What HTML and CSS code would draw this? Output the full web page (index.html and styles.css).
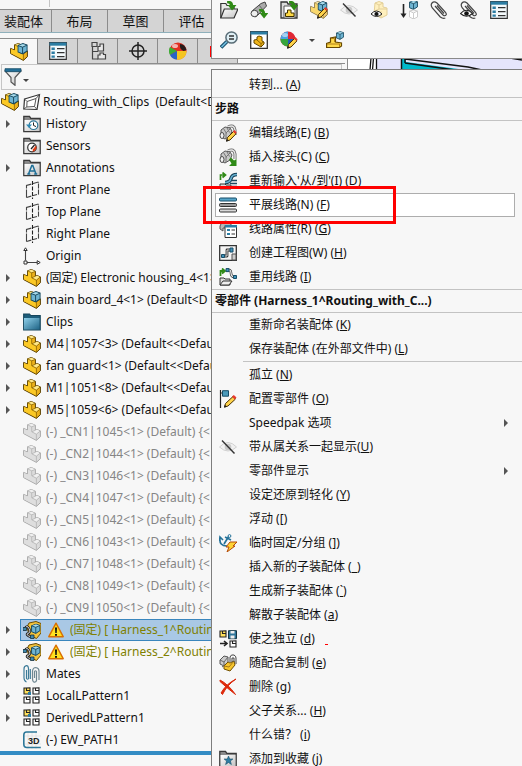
FILE: index.html
```html
<!DOCTYPE html>
<html lang="zh-CN">
<head>
<meta charset="utf-8">
<meta name="viewport" content="width=device-width, initial-scale=1">
<title>Routing_with_Clips</title>
<link rel="stylesheet" href="styles.css">
</head>
<body>
<svg class="sprite" aria-hidden="true">
  <defs>
    <linearGradient id="g-blue" x1="0" y1="0" x2="1" y2="1"><stop offset="0" stop-color="#8fd0ea"/><stop offset="1" stop-color="#1f6486"/></linearGradient>
    <linearGradient id="g-grey" x1="0" y1="0" x2="1" y2="1"><stop offset="0" stop-color="#fff"/><stop offset="1" stop-color="#c4c4c4"/></linearGradient>
  </defs>
  <symbol id="part" viewBox="0 0 18 18">
    <path d="M.6 5.4 4.5 7V1.8L8.4.5l4 1.8v5l1.800-.8 3.200 1.400v5.800l-4 3.700L.6 10.600Z" fill="var(--mid)" stroke="var(--line)"/>
    <path d="M4.900 2.200 8.700 4v5l4.500 2.400v5.200L1 10.200V6l3.900 1.500Z" fill="var(--face)"/>
    <path d="M4.500 1.900 8.400.700l3.800 1.600-3.700 1.500ZM9 8.600l5.200-1.900 2.800 1.300-3.800 2.900Z" fill="var(--light)"/>
    <path d="M8.700 3.800v5l4.700 2.400v6M8.700 3.800l3.600-1.400M4.500 1.800l4.200 2M13.400 11.200l3.800-3.200M9 8.700l3.500-1.500" fill="none" stroke="var(--edge)" stroke-width=".8"/>
  </symbol>
  <symbol id="cube" viewBox="0 0 10 11">
    <path d="M.6 2.4 5.4.6l4 1.400v5.600L5 10.400.6 8.600Z" fill="#6eb4d2" stroke="#16465c" stroke-width="1"/>
    <path d="m1 2.500 4-1.400 4 1.100-4 1.600Z" fill="#a9dbec"/>
    <path d="M.6 2.400 5 4l4.400-2M5 4v6.400" fill="none" stroke="#16465c" stroke-width=".9"/>
  </symbol>
  <symbol id="assembly" viewBox="0 0 18 18">
    <use href="#part"/><use href="#cube" x="7.300" y="0" width="10.500" height="11.500"/>
  </symbol>
  <symbol id="harness" viewBox="0 0 18 18">
    <path d="M4 6 6 2l7-1.500 5 2V12l-4.500 5.500L6 14Z" fill="#f3c33c" stroke="#6d4d00"/>
    <use href="#cube" x="8" y="2.500" width="9.500" height="10.500"/>
    <path d="M2 7.500q2-4 4 0t-1 5 3 3.500" fill="none" stroke="#222" stroke-width="2.600"/>
    <path d="M2 7.500q2-4 4 0t-1 5 3 3.500" fill="none" stroke="#ddd" stroke-width="1"/>
    <path d="M0 6.500h3.500v3H0ZM7.500 14h3.500v3.500H7.500Z" fill="#3f89ac" stroke="#16303c" stroke-width=".8"/>
  </symbol>
  <symbol id="folder-base" viewBox="0 0 18 18">
    <path d="M.8 2.500V1.300h5.700l1.300 2h9.400V16.500H.8Z" fill="#888" stroke="#3a3a3a" stroke-width="1.300"/>
    <path d="M1.500 5h15v11h-15Z" fill="url(#g-grey)"/>
  </symbol>
  <symbol id="history" viewBox="0 0 18 18"><use href="#folder-base"/><circle cx="10.500" cy="10.200" r="4.300" fill="#fff" stroke="#2d7596" stroke-width="1.200"/><path d="M10.500 7.500v2.900l2.500 1.200" fill="none" stroke="#222"/><path d="M3 9.500h6L6 13Z" fill="#2d8ab5"/></symbol>
  <symbol id="sensors" viewBox="0 0 18 18"><use href="#folder-base"/><circle cx="9" cy="10.500" r="4.300" fill="#fff" stroke="#333" stroke-width="1.200"/><path d="M13 8.500a4.300 4.300 0 0 1-3.500 6.200l.5-2.500Z" fill="#e13a12"/><path d="m8 12 3.500-4" stroke="#222" stroke-width="1.400"/></symbol>
  <symbol id="annot" viewBox="0 0 18 18"><use href="#folder-base"/><path d="m5.500 15 3.300-8.500h1L13 15M6.700 12h5M4.300 15h3M11.200 15h3" fill="none" stroke="#1f6f97" stroke-width="1.500"/></symbol>
  <symbol id="plane" viewBox="0 0 18 18"><path d="M3.500 16.500v-12L15.500 1" fill="none" stroke="#444" stroke-width="1.100" stroke-dasharray="8 1"/><path d="M3.500 16.500 15.500 13V1" fill="none" stroke="#444" stroke-width="1.100" stroke-dasharray="5 1"/><path d="M9.500 0v18" stroke="#222" stroke-width="1.100" stroke-dasharray="4 1.500"/></symbol>
  <symbol id="origin" viewBox="0 0 18 18"><path d="M2.500 2v11.500M4 15.500h11" fill="none" stroke="#444" stroke-width="1.100"/><path d="M.8 3.500 2.500.8l1.700 2.700ZM14.200 13.700l3 1.800-3 1.800ZM1 14h3v3H1Z" fill="#fff" stroke="#333"/></symbol>
  <symbol id="folder" viewBox="0 0 18 18"><path d="M.7 2V1h5.800l1.200 1.500h9.500v14.300H.7Z" fill="#1d5d7b" stroke="#16465c" stroke-width="1.200"/><path d="M1 5h15.500v11.500H1Z" fill="url(#g-blue)"/></symbol>
  <symbol id="sketch" viewBox="0 0 18 18"><path d="m1.500 6 15-4.500L14 16.500.8 16Z" fill="#fff" stroke="#333" stroke-width="1.200"/><path d="m4 8.500 9-3-1.500 8L3.800 14Z" fill="#fff" stroke="#555"/><path d="m1.500 6 2.500 2.500M13 5.500l3.500-4M11.500 13.500l2.500 3M.8 16l3-2" stroke="#555"/></symbol>
  <symbol id="warn" viewBox="0 0 16 16"><path d="M8 1.200 15.200 14.700H.8Z" fill="#ffe11f" stroke="#d96f00" stroke-width="1.400" stroke-linejoin="round"/><path d="M7 5.500h2L8.700 11H7.300ZM7 12h2v1.800H7Z" fill="#111"/></symbol>
  <symbol id="mates" viewBox="0 0 18 18"><path d="M3.500 5v8.500q1.200 1.500 2 0V3.500Q5.200.600 3.500.700 1 1 1 4v9q.3 3.500 2.500 3.800M7.300 14V4" fill="none" stroke="#3d7b98" stroke-width="1.200"/><path d="M11.500 13V6.500q1-1.500 2 0v9q-1 2.500-3 1.200-1-.700-1-3.200V6q.5-3.500 3.300-3.500Q16 3 16 6v9" fill="none" stroke="#6f8792" stroke-width="1.200"/></symbol>
  <symbol id="cell" viewBox="0 0 8 8"><path d="M1 1h2.500v2.500H7V7H1ZM3.500 3.500V1L7 .8v2.700" fill="var(--cell)" stroke="#222" stroke-width="1.100"/></symbol>
  <symbol id="pattern" viewBox="0 0 18 18"><use class="cell-yellow" href="#cell" width="8" height="8"/><use class="cell-white" href="#cell" x="9" width="8" height="8"/><use class="cell-white" href="#cell" y="9" width="8" height="8"/><use class="cell-white" href="#cell" x="9" y="9" width="8" height="8"/><path d="M5 5h3v3H5Z" fill="#2c7da3"/></symbol>
  <symbol id="path3d" viewBox="0 0 18 18"><path d="M5 0v18M9 0v18M13 0v18M0 5h18M0 13h18" stroke="#ddd" stroke-width=".7"/><path d="M14 1H3.500Q.8 1 .8 4v9q0 3.500 3 3.500h14" fill="none" stroke="#2d7899" stroke-width="1.600"/></symbol>
  <symbol id="props" viewBox="0 0 18 18"><path d="M.7.700h16.600v16.600H.7Z" fill="#f4fafc" stroke="#333" stroke-width="1.200"/><path d="M.5.500h17v3.200H.5Z" fill="#2c7da3"/><path d="M2.500 5.500h3.300v2.500H2.500ZM2.500 9.500h3.300V12H2.500ZM2.500 13.500h3.300v2.200H2.500Z" fill="#2c7da3"/><path d="M8 6.700h7.500M8 10.700h7.500M8 14.700h7.500" stroke="#333" stroke-width="1.200"/></symbol>
  <symbol id="config" viewBox="0 0 18 18"><path d="M3 .500h5v4H3ZM3.500 5v12H9M4 9.500h5" fill="none" stroke="#444" stroke-width="1.200"/><path d="M9 4.500h2V2h3.500v7H9ZM9 13h2v-2h3.500v1.500h2V17H9Z" fill="#e9e9e9" stroke="#444" stroke-width="1.200"/></symbol>
  <symbol id="target" viewBox="0 0 18 18"><circle cx="9" cy="9" r="6" fill="none" stroke="#222" stroke-width="1.500"/><path d="M9 0v18M0 9h18" stroke="#222" stroke-width="1.500"/></symbol>
  <symbol id="ball" viewBox="0 0 18 18"><circle cx="9" cy="9" r="8.600" fill="#e33022"/><path d="M8 9 1 5A8.600 8.600 0 0 0 1 13Z" fill="#3bae36"/><path d="M8 9 1 13a8.600 8.600 0 0 0 7 4.600Z" fill="#2864c8"/><path d="M8 9v8.600A8.600 8.600 0 0 0 17.600 9Z" fill="#f4c522"/><path d="M11 2q5 0 6.500 6l-3 1Q10 7 11 2Z" fill="#251c1b"/><ellipse cx="6" cy="4" rx="3" ry="2" fill="#fff" opacity=".65"/></symbol>
  <symbol id="ball4" viewBox="0 0 18 18"><circle cx="8" cy="8" r="7.600" fill="#e02735"/><path d="M8 8V.400A7.600 7.600 0 0 0 .4 8Z" fill="#4aa0e0"/><path d="M8 8H.4A7.600 7.600 0 0 0 8 15.600Z" fill="#36a53c"/><path d="M8 8v7.600A7.600 7.600 0 0 0 15.600 8Z" fill="#2459b8"/><ellipse cx="5" cy="4" rx="3" ry="2" fill="#fff" opacity=".5"/><use href="#pencil"/></symbol>
  <symbol id="pencil" viewBox="0 0 18 18"><path d="m7.500 17 1-3.500 6-6 2.500 2.300-6 6.200Z" fill="#ffd34a" stroke="#4a3000"/><path d="m14 7.500 1.500-1.500 2.200 2.500-1.400 1.300Z" fill="#e83a30"/><path d="m7 17.700.9-3 2 2Z" fill="#222"/></symbol>
  <symbol id="funnel" viewBox="0 0 18 18"><path d="M1 3h16l-6 6.500v7.800L7 14V9.500Z" fill="url(#g-grey)" stroke="#555" stroke-width="1.200"/><path d="M1 .7h16v3H1Z" fill="#236f98" stroke="#164c67" stroke-width=".8"/></symbol>
  <symbol id="arrow-down" viewBox="0 0 10 10"><path d="M1 1q5-1 5.500 3.500h3L5.500 9.600 1.500 4.500h2Q3.500 3 1 3Z" fill="#2f8a16"/></symbol>
  <symbol id="open" viewBox="0 0 18 18"><path d="M.8 16.500V2.500h5l1.200 2h7v12Z" fill="#e8e8e8" stroke="#333" stroke-width="1.200"/><path d="m.8 17 3.500-9H18l-4 9Z" fill="url(#g-grey)" stroke="#333" stroke-width="1.200"/><use href="#arrow-down" x="6" y="-1" width="11" height="11"/></symbol>
  <symbol id="connector" viewBox="0 0 18 18"><path d="M9 3q6-3 7 3v5" fill="none" stroke="#666" stroke-width="3"/><path d="M9 3q6-3 7 3v5" fill="none" stroke="#e6e6e6" stroke-width="1.400"/><path d="m2 6 4-3 5 1 2 3-2 5-5 3-4-2Z" fill="#c9c9c9" stroke="#555"/><path d="m4.500 4.500 3 5m0-6.500 3 5.500M7 14V9l4-4" fill="none" stroke="#777"/><ellipse cx="3" cy="11.500" rx="2" ry="3" fill="#f2f2f2" stroke="#444"/></symbol>
  <symbol id="insert-tube" viewBox="0 0 18 18"><path d="m2 10 9-7.500 4-1.500 1.500 4L7 15q-4 3-5-5Z" fill="#aaa" stroke="#444"/><path d="m9 4 4 5" stroke="#666"/><ellipse cx="4.500" cy="12.500" rx="3.500" ry="3.200" fill="#eee" stroke="#444"/><use href="#arrow-down" x="8" y="7" width="11" height="11"/></symbol>
  <symbol id="open-sub" viewBox="0 0 18 18"><path d="M1 1h6l1 2h9v14H1Z" fill="#ddd" stroke="#333" stroke-width="1.300"/><path d="M4 5h11v12H4Z" fill="#fff" stroke="#555"/><path d="M5.500 15.500V12h2V9h3.500v3h3v3.500Z" fill="#ffda45" stroke="#3f3100"/><use href="#arrow-down" x="8" y="-1" width="11" height="11"/></symbol>
  <symbol id="edit-asm" viewBox="0 0 18 18"><g opacity=".65"><use href="#part"/></g><use href="#cube" x="7.500" width="10" height="11"/><use href="#pencil"/></symbol>
  <symbol id="hide" viewBox="0 0 18 18"><path d="M.5 9Q9 0 17.500 9 9 17 .5 9Z" fill="#f1f1f1" stroke="#d0d0d0"/><circle cx="9" cy="9" r="3.300" fill="#c8c8c8"/><path d="m3 2.500 12.500 13" stroke="#333" stroke-width="1.400"/></symbol>
  <symbol id="eye" viewBox="0 0 12 8"><path d="M.5 4Q6-2 11.500 4 6 9 .5 4Z" fill="#fff" stroke="#222"/><circle cx="6" cy="4" r="2.100" fill="#111"/></symbol>
  <symbol id="show-parts" viewBox="0 0 18 18"><path d="m5 2 4-1.500L13 2v4l4 1v7l-6 3-7-4Z" fill="#fff0be" stroke="#e3cf98"/><path d="m5 2 4 2 4-2M9 4v4l8 0M11 10v6M9 8l-4 2" fill="none" stroke="#e3cf98"/><use href="#eye" y="9" width="13" height="8"/></symbol>
  <symbol id="suppress" viewBox="0 0 18 18"><path d="M3.500 3v11" stroke="#222" stroke-width="1.600"/><path d="m.5 12.500 3 4.500 3-4.500Z" fill="#222"/><use href="#cube" x="9" y="-1" width="9" height="10"/><path d="m9.500 10 4-1 4 1v6l-4 2-4-2Zm0 0 4 2 4-2m-4 2v6" fill="#fff" stroke="#ccc"/></symbol>
  <symbol id="clip" viewBox="0 0 18 18"><path d="m5 5 8 9q2 1.500 3 0 .8-1-.5-2.700L7 2Q4-.3 2 2q-1.700 2 .3 5l8 9q2.800 2 5 1M7 4.500l7 8" fill="none" stroke="#444" stroke-width="1.200"/></symbol>
  <symbol id="clip-eye" viewBox="0 0 18 18"><use href="#clip"/><use href="#eye" y="8" width="13" height="9"/></symbol>
  <symbol id="magnify" viewBox="0 0 18 18"><path d="m1 16.500 6-6" stroke="#174e6a" stroke-width="3.800"/><path d="m1.500 16 5.500-5.500" stroke="#70bbdc" stroke-width="1.700"/><circle cx="11.500" cy="6.500" r="5.600" fill="#dfeff5" stroke="#596d77" stroke-width="1.500"/><path d="M9 5h5M9 8h5" stroke="#333" stroke-width="1.600"/></symbol>
  <symbol id="part-window" viewBox="0 0 18 18"><path d="M.7.700h16.600v16.600H.7Z" fill="#fff" stroke="#333" stroke-width="1.300"/><path d="M.5.500h17v3H.5Z" fill="#2c7da3"/><path d="m4 9 3-.500V6l2-1 3 1v4l2 1v2l-3 3-7-4Z" fill="#f0b51b" stroke="#654800"/><path d="m7 9 4 3.500 3-1.500m-3 1.500V15" fill="none" stroke="#8c6500"/></symbol>
  <symbol id="new-part" viewBox="0 0 18 18"><path d="M.6 16.500v-4L4.500 11V7l5-1v5l6 1v3l-2 1.500Z" fill="#ffda4a" stroke="#684900" stroke-width="1.200"/><path d="M1 13h12.500v3M5 7.500h3.500V11" fill="none" stroke="#b18019"/><use href="#cube" x="10" y="0" width="8" height="9"/></symbol>
  <symbol id="edit-route" viewBox="0 0 18 18"><use href="#connector"/><use href="#pencil"/></symbol>
  <symbol id="insert-conn" viewBox="0 0 18 18"><use href="#connector"/><path d="m10 11.500 2-2 3 3 2.500-1.500v7H10l2.500-2.500Z" fill="#2f8a16"/></symbol>
  <symbol id="from-to" viewBox="0 0 18 18"><path d="M1.500 8V3h4M3.500.500 6.500 3l-3 2.500" fill="none" stroke="#2f8a16" stroke-width="1.700"/><path d="M1 17v-5h5l1 1h5v4Z" fill="#ddd" stroke="#333"/><path d="M6 10.500q5 0 6-4t6-4" fill="none" stroke="#163f54" stroke-width="3.600"/><path d="M6 10.500q5 0 6-4t6-4" fill="none" stroke="#65afd0" stroke-width="1.600"/><path d="M12 8.500h6M11 11.500h7M13 14.500h5" stroke="#1d4a61" stroke-width="1.500"/></symbol>
  <symbol id="flatten" viewBox="0 0 18 18"><rect x=".5" y="2" width="17" height="3" rx="1" fill="#56a5c9" stroke="#174d68"/><rect x=".5" y="7.500" width="17" height="3" rx="1" fill="#999" stroke="#333"/><rect x=".5" y="13" width="17" height="3" rx="1" fill="#d8d8d8" stroke="#333"/></symbol>
  <symbol id="route-props" viewBox="0 0 18 18"><path d="M1 6 3 2l4-1 5 3v4H4v3L1 9Z" fill="#b7b7b7" stroke="#555"/><path d="M6 5.500h11.500V17.500H6Z" fill="#fff" stroke="#333"/><path d="M6 5h12v2.500H6ZM8 9h3v2H8ZM8 13h3v2H8Z" fill="#2c7da3"/><path d="M12.500 10H16M12.500 14H16" stroke="#333"/></symbol>
  <symbol id="drawing" viewBox="0 0 18 18"><path d="M.7 1.700h16.600v14.600H.7Z" fill="#f4f4f4" stroke="#333" stroke-width="1.300"/><path d="M3 12h5V6h5" fill="none" stroke="#333" stroke-width="2.800" stroke-linejoin="round"/><path d="M3 12h5V6h5" fill="none" stroke="#ddd" stroke-width="1"/><path d="M2.500 10.500h3v3h-3ZM11 4h3v4h-3Z" fill="#3f91b8" stroke="#174d68"/><path d="M13 10h4v6h-4Z" fill="#ccc" stroke="#555"/></symbol>
  <symbol id="reuse" viewBox="0 0 18 18"><path d="M1.500 8V3h3M3 .500 6 3 3 5.500" fill="none" stroke="#2f8a16" stroke-width="1.800"/><path d="M8 2q4-1 4 3t4 4" fill="none" stroke="#333" stroke-width="2.600"/><path d="M8 2q4-1 4 3t4 4" fill="none" stroke="#eee" stroke-width="1.200"/><path d="M7 .600h3v3H7ZM14.500 7.500h3v3h-3Z" fill="#3f91b8" stroke="#174d68"/><path d="M1 17v-7h4l1 1h5v6Z" fill="#ddd" stroke="#333"/><path d="m1 17 3-4h9l-3 4Z" fill="#eee" stroke="#333"/></symbol>
  <symbol id="configure" viewBox="0 0 18 18"><path d="M1.500 0v18" stroke="#222" stroke-width="1.200"/><path d="M2 3h2" stroke="#222"/><path d="M3.500.700h6v5.500h-6Z" fill="#4a9abb" stroke="#174d68"/><path d="m5.500 17 1-3.500 7.500-7 2.500 2.500-7.500 7Z" fill="#ffd34a" stroke="#4a3000"/><path d="m13 6.500 1.800-1.500 2.700 2.500-2 2Z" fill="#e83a30"/><path d="m5 17.700.9-3 2 2Z" fill="#222"/></symbol>
  <symbol id="anchor" viewBox="0 0 18 18"><path d="M1 4q-1 8 7 8M10 2 5 10M6 3l6 3M.500 7 1 3l3 3" fill="none" stroke="#257299" stroke-width="1.700"/><circle cx="10.500" cy="2" r="1.400" fill="#fff" stroke="#257299"/><path d="m11 8 7 0-4 4h2l-8 6 2-5H7Z" fill="#ffd334" stroke="#b44b09"/></symbol>
  <symbol id="independent" viewBox="0 0 18 18"><use class="cell-yellow" href="#cell" width="8" height="8"/><path d="M9.500.700h8v8h-8Z" fill="#2e759a" stroke="#163543"/><path d="M11.500 1h4v2.500h-4ZM11.500 5.500h4v3h-4Z" fill="#eee"/><path d="M1 13.500h6M5 11l3 2.500L5 16" fill="none" stroke="#222" stroke-width="1.600"/><use class="cell-white" href="#cell" x="10" y="10" width="8" height="8"/></symbol>
  <symbol id="copy-mates" viewBox="0 0 18 18"><path d="m1 6 4-4 4 1v5l-4 4-4-2Z" fill="#ccc" stroke="#555"/><path d="m1 6 4 2 4-5M5 8v4M3 13l4-3" stroke="#666" fill="none"/><path d="m5 12 4-4 2 1 4-2 1 4-5 6-6-2Z" fill="#f6c52d" stroke="#725000"/><path d="m5 12 5 1 5-6" fill="none" stroke="#a77917"/><path d="M11 8V3q1-3 4-2 2 1 2 3v6M13 8V4h2v4" fill="none" stroke="#444"/></symbol>
  <symbol id="delete" viewBox="0 0 18 18"><path d="M1 2Q9 6 16.500 16.500 8 10 1 3.500ZM17 1Q8 7 3.500 16.500L2 15Q7 6 17 1Z" fill="#e32c0b" stroke="#d9280b"/></symbol>
  <symbol id="favorite" viewBox="0 0 18 18"><use href="#folder-base"/><path d="m9.500 6 1.200 3h3.200l-2.500 2 1 3.500-2.900-2-2.900 2 1-3.500-2.500-2h3.200Z" fill="#2c7da3" stroke="#174d68" stroke-width=".6"/></symbol>
</svg>

<div class="app">
  <section class="side">
    <div class="ribbon-foot"></div>
    <nav class="ribbon-tabs"><button>装配体</button><button>布局</button><button>草图</button><button>评估</button></nav>
    <div class="panel-tabs">
      <button class="active" aria-label="特征树"><svg class="ico"><use href="#assembly"/></svg></button>
      <button aria-label="属性"><svg class="ico"><use href="#props"/></svg></button>
      <button aria-label="配置"><svg class="ico"><use href="#config"/></svg></button>
      <button aria-label="尺寸"><svg class="ico"><use href="#target"/></svg></button>
      <button aria-label="外观"><svg class="ico"><use href="#ball"/></svg></button>
      <button class="more" aria-label="更多"><span class="red-mark"></span></button>
    </div>
    <button class="filter" aria-label="过滤"><svg class="ico"><use href="#funnel"/></svg><span class="caret"></span></button>
    <div class="root"><svg class="ico"><use href="#assembly"/></svg><svg class="ico"><use href="#sketch"/></svg><span>Routing_with_Clips&nbsp; (Default&lt;D</span></div>
    <ul class="tree">
      <li class="open"><svg class="ico"><use href="#history"/></svg><span>History</span></li>
      <li><svg class="ico"><use href="#sensors"/></svg><span>Sensors</span></li>
      <li class="open"><svg class="ico"><use href="#annot"/></svg><span>Annotations</span></li>
      <li><svg class="ico"><use href="#plane"/></svg><span>Front Plane</span></li>
      <li><svg class="ico"><use href="#plane"/></svg><span>Top Plane</span></li>
      <li><svg class="ico"><use href="#plane"/></svg><span>Right Plane</span></li>
      <li><svg class="ico"><use href="#origin"/></svg><span>Origin</span></li>
      <li class="open"><svg class="ico"><use href="#part"/></svg><span>(固定) Electronic housing_4&lt;1&gt;</span></li>
      <li class="open"><svg class="ico"><use href="#assembly"/></svg><span>main board_4&lt;1&gt; (Default&lt;D</span></li>
      <li class="open"><svg class="ico"><use href="#folder"/></svg><span>Clips</span></li>
      <li class="open"><svg class="ico"><use href="#part"/></svg><span>M4|1057&lt;3&gt; (Default&lt;&lt;Default</span></li>
      <li class="open"><svg class="ico"><use href="#part"/></svg><span>fan guard&lt;1&gt; (Default&lt;&lt;Default</span></li>
      <li class="open"><svg class="ico"><use href="#part"/></svg><span>M1|1051&lt;8&gt; (Default&lt;&lt;Default</span></li>
      <li class="open"><svg class="ico"><use href="#part"/></svg><span>M5|1059&lt;6&gt; (Default&lt;&lt;Default</span></li>
      <li class="off"><svg class="ico"><use href="#part"/></svg><span>(-) _CN1|1045&lt;1&gt; (Default) {&lt;</span></li>
      <li class="off"><svg class="ico"><use href="#part"/></svg><span>(-) _CN2|1044&lt;1&gt; (Default) {&lt;</span></li>
      <li class="off"><svg class="ico"><use href="#part"/></svg><span>(-) _CN3|1046&lt;1&gt; (Default) {&lt;</span></li>
      <li class="off"><svg class="ico"><use href="#part"/></svg><span>(-) _CN4|1047&lt;1&gt; (Default) {&lt;</span></li>
      <li class="off"><svg class="ico"><use href="#part"/></svg><span>(-) _CN5|1042&lt;1&gt; (Default) {&lt;</span></li>
      <li class="off"><svg class="ico"><use href="#part"/></svg><span>(-) _CN6|1043&lt;1&gt; (Default) {&lt;</span></li>
      <li class="off"><svg class="ico"><use href="#part"/></svg><span>(-) _CN7|1048&lt;1&gt; (Default) {&lt;</span></li>
      <li class="off"><svg class="ico"><use href="#part"/></svg><span>(-) _CN8|1049&lt;1&gt; (Default) {&lt;</span></li>
      <li class="off"><svg class="ico"><use href="#part"/></svg><span>(-) _CN9|1050&lt;1&gt; (Default) {&lt;</span></li>
      <li class="open alert selected"><svg class="ico"><use href="#harness"/></svg><svg class="warn"><use href="#warn"/></svg><span>(固定) [ Harness_1^Routing</span></li>
      <li class="open alert"><svg class="ico"><use href="#harness"/></svg><svg class="warn"><use href="#warn"/></svg><span>(固定) [ Harness_2^Routing</span></li>
      <li class="open"><svg class="ico"><use href="#mates"/></svg><span>Mates</span></li>
      <li class="open"><svg class="ico"><use href="#pattern"/></svg><span>LocalLPattern1</span></li>
      <li class="open"><svg class="ico"><use href="#pattern"/></svg><span>DerivedLPattern1</span></li>
      <li><svg class="ico"><use href="#path3d"/><text class="label3d" x="5" y="13">3D</text></svg><span>(-) EW_PATH1</span></li>
    </ul>
    <div class="rollback"></div>
  </section>
  <section class="view">
    <svg class="model" viewBox="0 0 174 12" preserveAspectRatio="xMinYMin slice" aria-hidden="true"><path d="M28 0h146v12H28Z" fill="#e5e5fb"/><path d="M22 12 23 0M24.500 12 25.500 0M28.500 12V0" stroke="#111" stroke-width="1.300"/><path d="M53 12V0h4l1 4 60 8Z" fill="#00b9ca"/><path d="M53.500 12V0M57 1l63 8 14 3M57 5l50 7M162 0l12 2M57 0v5" fill="none" stroke="#111" stroke-width="1.500"/></svg>
  </section>

  <div class="context-bar" role="toolbar">
    <div class="tools">
      <button aria-label="打开"><svg class="ico"><use href="#open"/></svg></button>
      <button aria-label="插入"><svg class="ico"><use href="#insert-tube"/></svg></button>
      <button aria-label="打开子装配体"><svg class="ico"><use href="#open-sub"/></svg></button>
      <button aria-label="编辑装配体"><svg class="ico"><use href="#edit-asm"/></svg></button>
      <button aria-label="隐藏"><svg class="ico"><use href="#hide"/></svg></button>
      <button aria-label="显示零部件"><svg class="ico"><use href="#show-parts"/></svg></button>
      <button aria-label="压缩"><svg class="ico"><use href="#suppress"/></svg></button>
      <button aria-label="配合"><svg class="ico"><use href="#clip"/></svg></button>
      <button aria-label="查看配合"><svg class="ico"><use href="#clip-eye"/></svg></button>
      <button aria-label="属性"><svg class="ico"><use href="#props"/></svg></button>
    </div>
    <div class="tools">
      <button aria-label="放大"><svg class="ico"><use href="#magnify"/></svg></button>
      <button aria-label="预览窗口"><svg class="ico"><use href="#part-window"/></svg></button>
      <button class="split" aria-label="外观"><svg class="ico"><use href="#ball4"/></svg><span class="caret"></span></button>
      <button aria-label="新零件"><svg class="ico"><use href="#new-part"/></svg></button>
    </div>
  </div>

  <div class="menu" role="menu">
    <button role="menuitem"><span>转到... (<u>A</u>)</span></button>
    <h2>步路</h2>
    <button role="menuitem"><svg class="ico"><use href="#edit-route"/></svg><span>编辑线路(E) (<u>B</u>)</span></button>
    <button role="menuitem"><svg class="ico"><use href="#insert-conn"/></svg><span>插入接头(C) (<u>C</u>)</span></button>
    <button role="menuitem"><svg class="ico"><use href="#from-to"/></svg><span>重新输入'从/到'(I) (<u>D</u>)</span></button>
    <button role="menuitem" class="hot"><svg class="ico"><use href="#flatten"/></svg><span>平展线路(N) (<u>F</u>)</span></button>
    <button role="menuitem"><svg class="ico"><use href="#route-props"/></svg><span>线路属性(R) (<u>G</u>)</span></button>
    <button role="menuitem"><svg class="ico"><use href="#drawing"/></svg><span>创建工程图(W) (<u>H</u>)</span></button>
    <button role="menuitem"><svg class="ico"><use href="#reuse"/></svg><span>重用线路 (<u>I</u>)</span></button>
    <h2>零部件 (Harness_1^Routing_with_C...)</h2>
    <button role="menuitem"><span>重新命名装配体 (<u>K</u>)</span></button>
    <button role="menuitem"><span>保存装配体 (在外部文件中) (<u>L</u>)</span></button>
    <hr>
    <button role="menuitem"><span>孤立 (<u>N</u>)</span></button>
    <button role="menuitem"><svg class="ico"><use href="#configure"/></svg><span>配置零部件 (<u>O</u>)</span></button>
    <button role="menuitem" class="sub"><span>Speedpak 选项</span></button>
    <button role="menuitem"><svg class="ico"><use href="#hide"/></svg><span>带从属关系一起显示(<u>U</u>)</span></button>
    <button role="menuitem" class="sub"><span>零部件显示</span></button>
    <button role="menuitem"><span>设定还原到轻化 (<u>Y</u>)</span></button>
    <button role="menuitem"><span>浮动 (<u>[</u>)</span></button>
    <button role="menuitem"><svg class="ico"><use href="#anchor"/></svg><span>临时固定/分组 (<u>]</u>)</span></button>
    <button role="menuitem"><span>插入新的子装配体 (<u>_</u>)</span></button>
    <button role="menuitem"><span>生成新子装配体 (<u>`</u>)</span></button>
    <button role="menuitem"><span>解散子装配体 (<u>a</u>)</span></button>
    <button role="menuitem"><svg class="ico"><use href="#independent"/></svg><span>使之独立 (<u>d</u>)</span><i class="dot"></i></button>
    <button role="menuitem"><svg class="ico"><use href="#copy-mates"/></svg><span>随配合复制 (<u>e</u>)</span></button>
    <button role="menuitem"><svg class="ico"><use href="#delete"/></svg><span>删除 (<u>g</u>)</span></button>
    <button role="menuitem"><span>父子关系... (<u>H</u>)</span></button>
    <button role="menuitem"><span>什么错？ (<u>i</u>)</span></button>
    <button role="menuitem"><svg class="ico"><use href="#favorite"/></svg><span>添加到收藏 (<u>j</u>)</span></button>
  </div>
  <div class="callout"></div>
</div>
</body>
</html>
```
FILE: styles.css
```css
* { box-sizing: border-box; }

body {
  margin: 0;
  background: #f7f7f7;
  color: #111;
  font: 12px/22px "Noto Sans", "Noto Sans CJK SC", sans-serif;
}

button {
  margin: 0;
  padding: 0;
  border: 0;
  background: none;
  color: inherit;
  font: inherit;
  text-align: left;
}

.sprite { position: absolute; width: 0; height: 0; }

.ico {
  --light: #ffe98a;
  --face: #fbc926;
  --mid: #eeb21c;
  --line: #5a4100;
  --edge: #8a6300;
  display: block;
  flex: none;
  width: 18px;
  height: 18px;
}

.cell-yellow { --cell: #ffe05a; }
.cell-white { --cell: #fff; }

.app {
  position: relative;
  display: grid;
  grid-template-columns: 2fr 1fr;
  height: 100vh;
  overflow: hidden;
}

.side { min-width: 0; border-right: 1px solid #8c8c8c; }

/* Command tabs */
.ribbon-foot { width: 50px; height: 7px; margin-bottom: 2px; border-right: 1px solid #c4c4c4; }

.ribbon-tabs {
  display: flex;
  height: 24px;
  border-top: 1px solid #8c8c8c;
  border-bottom: 1px solid #8fb0bb;
  background: #d4d4d4;
  font-size: 13px;
}
.ribbon-tabs button { width: 56px; border-right: 1px solid #8c8c8c; text-align: center; }
.ribbon-tabs button:first-child { width: 52px; padding-right: 4px; }

/* Manager tabs */
.panel-tabs {
  display: flex;
  height: 26px;
  margin: 5px 2px 0 0;
  border-bottom: 1px solid #8c8c8c;
}
.panel-tabs button {
  display: grid;
  place-items: center;
  width: 40px;
  border-top: 1px solid #8c8c8c;
  border-right: 1px solid #8c8c8c;
  background: #d4d4d4;
}
.panel-tabs .active { width: 38px; height: 26px; background: #f7f7f7; }
.panel-tabs .more { justify-items: start; padding-left: 12px; }
.red-mark { width: 10px; height: 11px; background: #f00; }

.filter {
  display: flex;
  align-items: center;
  gap: 1px;
  width: calc(100% - 6px);
  height: 26px;
  margin-left: 1px;
  padding-left: 2px;
  border: 1px solid #c6c6c6;
}

.caret {
  border: 3px solid transparent;
  border-top-color: #444;
  border-bottom: 0;
}
.filter .caret { margin-top: 6px; }

/* Feature tree */
.root { display: flex; align-items: center; height: 23px; padding-left: 1px; white-space: nowrap; }
.root .ico + .ico { margin: 0 2px 0 4px; }

.tree { margin: 0; padding: 0; list-style: none; }
.tree li {
  display: flex;
  align-items: center;
  height: 22px;
  margin-left: 20px;
  padding-left: 3px;
  white-space: nowrap;
}
.tree .ico { margin-right: 5px; }
.tree .open { margin-left: 6px; padding-left: 0; }
.tree .open::before {
  content: "";
  flex: none;
  margin-right: 13px;
  border: 4px solid transparent;
  border-left-color: #555;
  border-right: 0;
}
.tree .off { color: #858585; }
.off .ico { --light: #f0f0f0; --face: #dedede; --mid: #dcdcdc; --line: #a9a9a9; --edge: #b4b4b4; }
.tree .alert { color: #808000; }
.tree .selected {
  background: linear-gradient(#3a86bd, #3a86bd) 14px 0 / 100% 1px no-repeat,
    linear-gradient(#3a86bd, #3a86bd) 14px 100% / 100% 1px no-repeat,
    linear-gradient(#3a86bd, #3a86bd) 14px 0 / 1px 100% no-repeat,
    linear-gradient(#a9c8e5, #a9c8e5) 14px 0 / 100% 100% no-repeat;
}
.warn { flex: none; width: 16px; height: 16px; margin: 0 6px 0 2px; }
.label3d { fill: #222; font: bold 9px "Liberation Sans", sans-serif; }

.rollback { height: 4px; background: #338cc4; }

/* Graphics area */
.view { padding-top: 58px; background: #fff; }
.model { display: block; width: 100%; height: 12px; }

/* Context toolbar */
.context-bar {
  position: absolute;
  top: 0;
  right: 0;
  left: 211px;
  height: 59px;
  padding: 1px 0 0 8px;
  border: 1px solid #8a8a8a;
  border-width: 0 0 1px 1px;
  background: #f7f7f7;
}
.tools { display: flex; gap: 12px; height: 30px; }
.tools button { height: 18px; }
.tools .split { display: flex; align-items: center; gap: 11px; margin-right: -1px; }

/* Context menu */
.menu {
  position: absolute;
  top: 69px;
  right: 0;
  bottom: 0;
  left: 211px;
  overflow: hidden;
  padding-top: 3px;
  border: 1px solid #7d7d7d;
  border-width: 1px 0 0 1px;
  background: #f7f7f7;
}
.menu button {
  display: flex;
  align-items: center;
  width: calc(100% - 10px);
  height: 24px;
  margin-left: 3px;
  padding-left: 34px;
  white-space: nowrap;
}
.menu .ico { margin: 0 12px 0 -30px; }
.menu .hot { padding-left: 33px; border: 1px solid #adadad; background: #fff; }
.menu .sub::after {
  content: "";
  margin: 0 7px 0 auto;
  border: 4px solid transparent;
  border-left-color: #555;
  border-right: 0;
}
.menu h2 {
  height: 24px;
  margin: 0;
  padding-left: 3px;
  border: 1px solid #c3c3c3;
  border-width: 1px 0;
  font-size: 12px;
  line-height: 22px;
}
.menu hr { height: 1px; margin: 0 0 1px 31px; border: 0; background: #c3c3c3; }
.dot { width: 3px; height: 1px; margin: 10px 0 0 10px; background: #f00; }
u { text-underline-offset: 1px; }

.callout {
  position: absolute;
  top: 186px;
  left: 203px;
  width: 193px;
  height: 38px;
  border: 3px solid #f00;
}
```
